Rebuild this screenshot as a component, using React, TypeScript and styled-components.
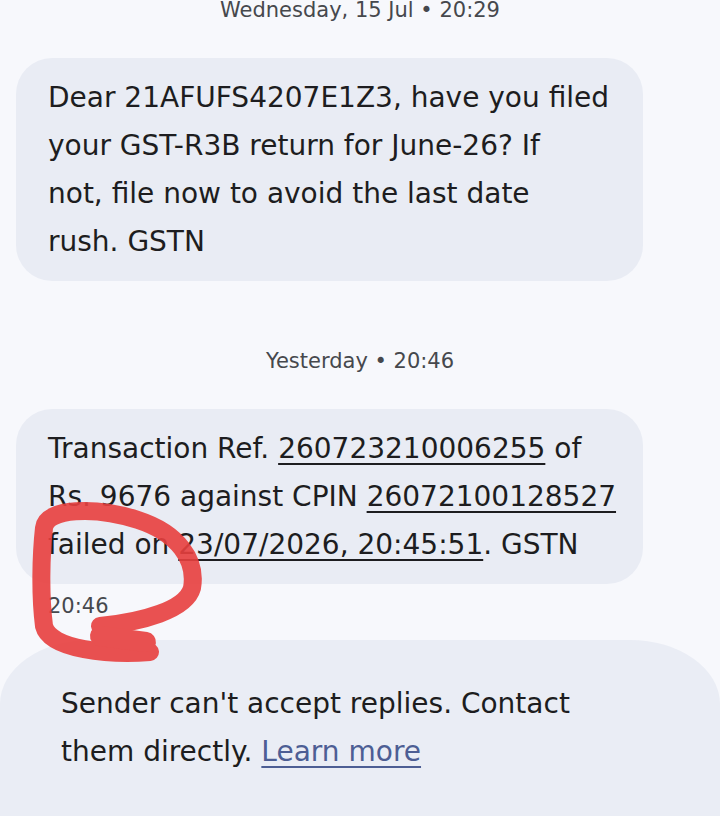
import styled, { createGlobalStyle } from 'styled-components';

const GlobalStyle = createGlobalStyle`
    html, body {
        margin: 0;
        padding: 0;
        background: #ffffff;
    }
    * {
        box-sizing: border-box;
    }
`;

type Part = {
    text: string;
    link?: boolean;
}

type Message = {
    date: string;
    lines: Part[][];
    time?: string;
}

// lines are kept as the phone wrapped them
const messages: Message[] = [
    {
        date: 'Wednesday, 15 Jul • 20:29',
        lines: [
            [{ text: 'Dear 21AFUFS4207E1Z3, have you filed' }],
            [{ text: 'your GST-R3B return for June-26? If' }],
            [{ text: 'not, file now to avoid the last date' }],
            [{ text: 'rush. GSTN' }],
        ],
    },
    {
        date: 'Yesterday • 20:46',
        lines: [
            [{ text: 'Transaction Ref. ' }, { text: '260723210006255', link: true }, { text: ' of' }],
            [{ text: 'Rs. 9676 against CPIN ' }, { text: '26072100128527', link: true }],
            [{ text: 'failed on ' }, { text: '23/07/2026, 20:45:51', link: true }, { text: '. GSTN' }],
        ],
        time: '20:46',
    },
];

export default function App() {
    return (
        <Page>
            <GlobalStyle />
            <Thread>
                {messages.map((msg, index) => (
                    <Group key={index} $first={index === 0}>
                        <DateLabel>{msg.date}</DateLabel>
                        <Bubble>
                            {msg.lines.map((line, li) => (
                                <Line key={li}>
                                    {line.map((p, i) =>
                                        p.link ? <Underlined key={i}>{p.text}</Underlined> : <span key={i}>{p.text}</span>
                                    )}
                                </Line>
                            ))}
                        </Bubble>
                        {msg.time && <TimeStamp>{msg.time}</TimeStamp>}
                    </Group>
                ))}
            </Thread>
            <NoReplyPanel>
                <Line>Sender can't accept replies. Contact</Line>
                <Line>
                    them directly. <LearnMore>Learn more</LearnMore>
                </Line>
            </NoReplyPanel>
            <BottomStrip />
            {/* hand-drawn red marker around the time stamp */}
            <Scribble viewBox="0 0 720 840" width="720" height="840">
                <g fill="none" stroke="#e8403f" strokeLinecap="round" strokeLinejoin="round" opacity="0.9">
                    <path
                        d="M 150 652 C 110 655, 50 650, 44 626 C 40 595, 41 555, 44 528 C 46 508, 95 506, 138 520 C 178 533, 197 560, 192 588 C 186 610, 142 622, 100 626"
                        strokeWidth="18"
                    />
                    <path d="M 100 636 L 146 642" strokeWidth="20" />
                </g>
            </Scribble>
        </Page>
    );
}

const Page = styled.div`
    position: relative;
    width: 720px;
    height: 840px;
    overflow: hidden;
    display: flex;
    flex-direction: column;
    background: #f7f8fc;
    font-family: "DejaVu Sans", "Open Sans", Arial, sans-serif;
    color: #1d1d20;
`;

const Thread = styled.div`
    display: flex;
    flex-direction: column;
    padding: 0 16px;
`;

const Group = styled.div<{ $first: boolean }>`
    display: flex;
    flex-direction: column;
    margin-top: ${p => (p.$first ? '-2px' : '68px')};
`;

const DateLabel = styled.div`
    text-align: center;
    font-size: 21px;
    line-height: 24px;
    color: #46484d;
`;

const Bubble = styled.div`
    width: 627px;
    margin-top: 36px;
    padding: 16px 32px 15px 32px;
    background: #e9ecf4;
    border-radius: 36px;
    font-size: 28px;
    line-height: 48px;
`;

const Line = styled.div`
    white-space: nowrap;
`;

const Underlined = styled.span`
    text-decoration: underline;
    text-decoration-thickness: 2px;
    text-underline-offset: 5px;
`;

const TimeStamp = styled.div`
    margin-top: 10px;
    padding-left: 32px;
    font-size: 21px;
    line-height: 24px;
    color: #46484d;
`;

const NoReplyPanel = styled.div`
    margin-top: 22px;
    height: 176px;
    padding: 40px 40px 40px 61px;
    background: #eaedf5;
    border-radius: 90px 90px 0 0 / 64px 64px 0 0;
    font-size: 28px;
    line-height: 48px;
    color: #1d1d20;
`;

const LearnMore = styled.span`
    color: #4d5e94;
    text-decoration: underline;
    text-decoration-thickness: 2px;
    text-underline-offset: 5px;
`;

const BottomStrip = styled.div`
    flex: 1;
    background: #ffffff;
`;

const Scribble = styled.svg`
    position: absolute;
    left: 0;
    top: 0;
    pointer-events: none;
`;
